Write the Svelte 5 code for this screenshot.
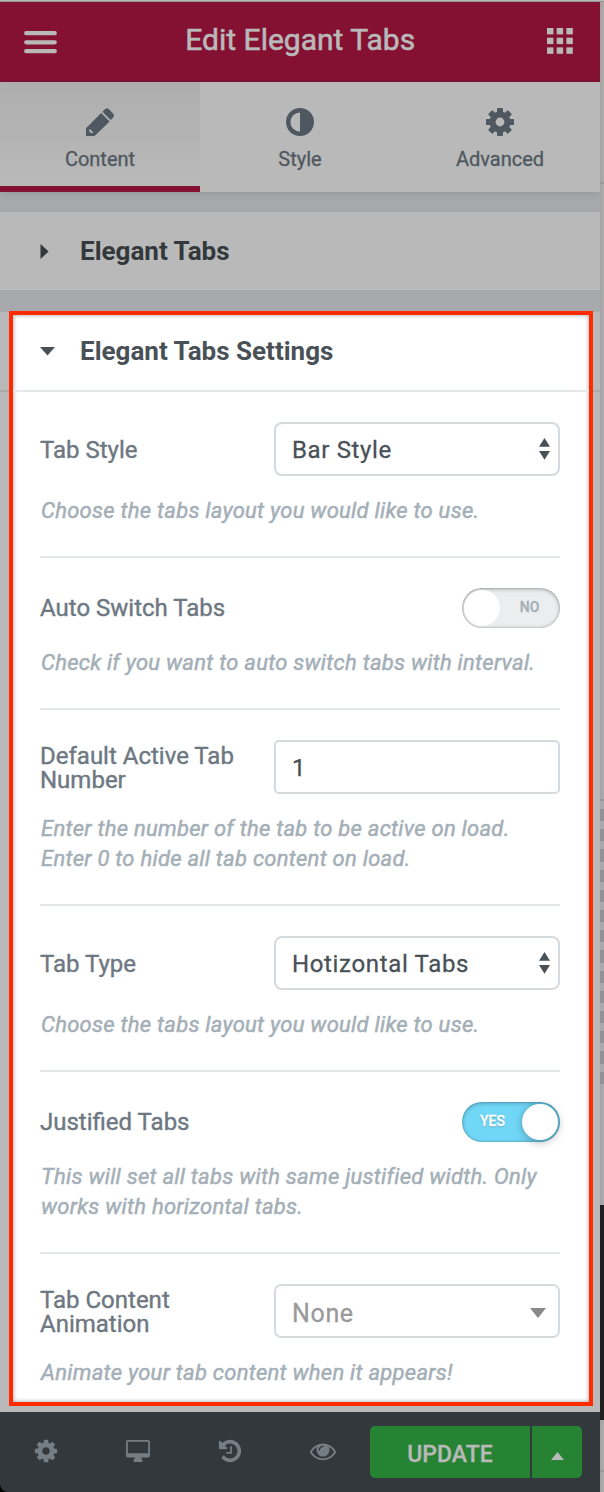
<script>
  const tabs = [
    { id: 'content', label: 'Content' },
    { id: 'style', label: 'Style' },
    { id: 'advanced', label: 'Advanced' }
  ];
  const controls = [
    { label: 'Tab Style', kind: 'select', value: 'Bar Style', help: 'Choose the tabs layout you would like to use.' },
    { label: 'Auto Switch Tabs', kind: 'switch', on: false, help: 'Check if you want to auto switch tabs with interval.' },
    { label: 'Default Active Tab Number', kind: 'input', value: '1', help: 'Enter the number of the tab to be active on load. Enter 0 to hide all tab content on load.' },
    { label: 'Tab Type', kind: 'select', value: 'Hotizontal Tabs', help: 'Choose the tabs layout you would like to use.' },
    { label: 'Justified Tabs', kind: 'switch', on: true, help: 'This will set all tabs with same justified width. Only works with horizontal tabs.' },
    { label: 'Tab Content Animation', kind: 'dropdown', value: 'None', help: 'Animate your tab content when it appears!' }
  ];
  const teeth = [0, 45, 90, 135, 180, 225, 270, 315];
  const cells = [0, 9.7, 19.4];
</script>

<div class="screen">
  <div class="panel">
    <header>
      <svg class="burger" width="33" height="24" viewBox="0 0 33 24"><path d="M2.2 2.2h28.6M2.2 11.3h28.6M2.2 20.2h28.6" stroke="#b9b9b9" stroke-width="4.2" stroke-linecap="round" /></svg>
      <h1>Edit Elegant Tabs</h1>
      <svg class="grid" width="26" height="26" viewBox="0 0 26 26" fill="#b9b9b9">
        {#each cells as y}{#each cells as x}<rect {x} {y} width="6.4" height="6.4" />{/each}{/each}
      </svg>
    </header>

    <nav>
      {#each tabs as tab, i}
        <div class="tab" class:active={i === 0}>
          <svg width="28" height="28" viewBox="0 0 28 28" fill="#4f5860">
            {#if tab.id === 'content'}
              <path fill-rule="evenodd" d="M0 20.2 15.2 5 23.6 13.4 8.6 28H0ZM3.4 21.2a2 2 0 0 1 2.3 2.2l1.5.4-.2 1.3-2.2-.1-1.8-2.1Z" />
              <path d="m16.5 3.8 2.7-2.7Q21 -.6 22.7 1.1l4.5 4.7q1.4 1.8 0 3.6l-2.6 2.7Z" />
            {:else if tab.id === 'style'}
              <path fill-rule="evenodd" d="M14 0a14 14 0 1 1 0 28a14 14 0 1 1 0-28ZM14 4.4a9.6 9.6 0 0 0 0 19.2Z" />
            {:else}
              <mask id="hub"><rect width="28" height="28" fill="#fff" /><circle cx="14" cy="14" r="4.4" fill="#000" /></mask>
              <g mask="url(#hub)">
                <circle cx="14" cy="14" r="10.6" />
                {#each teeth as a}<rect x="11" y="0" width="6" height="7" rx="1" transform={`rotate(${a} 14 14)`} />{/each}
              </g>
            {/if}
          </svg>
          <span>{tab.label}</span>
        </div>
      {/each}
    </nav>

    <section class="collapsed">
      <svg width="9" height="15" viewBox="0 0 9 15"><path d="M.5 0 8.6 7.5.5 15Z" fill="#32383c" /></svg>
      <h2>Elegant Tabs</h2>
    </section>

    <main>
      <div class="highlight">
        <div class="title">
          <svg width="15" height="9" viewBox="0 0 15 9"><path d="M0 0h15L7.5 8.5Z" fill="#495157" /></svg>
          <h2>Elegant Tabs Settings</h2>
        </div>
        <div class="controls">
          {#each controls as c}
            <div class="control">
              <div class="field" class:short={c.kind === 'switch'}>
                <div class="label">{c.label}</div>
                {#if c.kind === 'switch'}
                  <div class="switch" class:on={c.on}><i></i><b>{c.on ? 'YES' : 'NO'}</b></div>
                {:else}
                  <div class={`box ${c.kind}`}>
                    <span>{c.value}</span>
                    {#if c.kind === 'select'}
                      <svg width="11" height="22" viewBox="0 0 11 22"><path d="M0 8.700 5.500 0l5.500 8.700ZM0 13h11l-5.500 8.800Z" fill="#495157" /></svg>
                    {:else if c.kind === 'dropdown'}
                      <svg class="caret" width="16" height="10" viewBox="0 0 16 10"><path d="M0 0h16L8 10Z" fill="#888" /></svg>
                    {/if}
                  </div>
                {/if}
              </div>
              <p>{c.help}</p>
            </div>
          {/each}
        </div>
      </div>
    </main>

    <footer>
      <div class="tools">
        <div><svg width="26" height="26" viewBox="0 0 1792 1792"><path d="M1152 896q0-106-75-181t-181-75-181 75-75 181 75 181 181 75 181-75 75-181zm512-109v222q0 12-8 23t-20 13l-185 28q-19 54-39 91 35 50 107 138 10 12 10 25t-9 23q-27 37-99 108t-94 71q-12 0-26-9l-138-108q-44 23-91 38-16 136-29 186-7 28-36 28h-222q-14 0-24.5-8.5t-11.5-21.5l-28-184q-49-16-90-37l-141 107q-10 9-25 9-14 0-25-11-126-114-165-168-7-10-7-23 0-12 8-23 15-21 51-66.5t54-70.5q-27-50-41-99l-183-27q-13-2-21-12.5t-8-23.5v-222q0-12 8-23t19-13l186-28q14-46 39-92-40-57-107-138-10-12-10-24 0-10 9-23 26-36 98.5-107.5t94.5-71.5q13 0 26 10l138 107q44-23 91-38 16-136 29-186 7-28 36-28h222q14 0 24.5 8.5t11.5 21.5l28 184q49 16 90 37l142-107q9-9 24-9 13 0 25 10 129 119 165 170 7 8 7 22 0 12-8 23-15 21-51 66.5t-54 70.5q26 50 41 98l183 28q13 2 21 12.5t8 23.5z" /></svg></div>
        <div><svg width="24" height="22" viewBox="0 0 24 22"><path fill-rule="evenodd" d="M2 0h20q2 0 2 2v13.500q0 2-2 2H15l1.500 3v1.500h-9v-1.500l1.500-3H2q-2 0-2-2V2Q0 0 2 0ZM1.800 1.800v11.500h20.400V1.800Z" /></svg></div>
        <div class="history"><svg width="26" height="26" viewBox="0 0 1792 1792"><path d="M1664 896q0 156-61 298t-164 245-245 164-298 61q-172 0-327-72.5t-264-204.5q-7-10-6.500-22.5t8.500-20.5l137-138q10-9 25-9 16 2 23 12 73 95 179 147t225 52q104 0 198.500-40.5t163.500-109.500 109.500-163.500 40.500-198.500-40.500-198.500-109.500-163.500-163.500-109.500-198.500-40.500q-98 0-188 35.500t-160 101.500l137 138q31 30 14 69-17 40-59 40h-448q-26 0-45-19t-19-45v-448q0-42 40-59 39-17 69 14l130 129q107-101 244.500-156.500t284.500-55.500q156 0 298 61t245 164 164 245 61 298zm-640-288v448q0 14-9 23t-23 9h-320q-14 0-23-9t-9-23v-64q0-14 9-23t23-9h224v-352q0-14 9-23t23-9h64q14 0 23 9t9 23z" /></svg></div>
        <div><svg width="26" height="26" viewBox="0 0 1792 1792"><path d="M1664 960q-152-236-381-353 61 104 61 225 0 185-131.500 316.500t-316.500 131.500-316.500-131.500-131.500-316.500q0-121 61-225-229 117-381 353 133 205 333.500 326.500t434.500 121.500 434.500-121.500 333.500-326.500zm-720-384q0-20-14-34t-34-14q-125 0-214.500 89.500t-89.500 214.500q0 20 14 34t34 14 34-14 14-34q0-86 61-147t147-61q20 0 34-14t14-34zm848 384q0 34-20 69-140 230-376.500 368.500t-499.500 138.500-499.500-139-376.500-368q-20-35-20-69t20-69q140-229 376.500-368t499.500-139 499.500 139 376.500 368q20 35 20 69z" /></svg></div>
      </div>
      <div class="update">UPDATE</div>
      <div class="more"><svg width="13" height="8" viewBox="0 0 13 8"><path d="M0 8 6.500 0 13 8Z" fill="#b9b9b9" /></svg></div>
    </footer>
  </div>

  <aside>
    <div class="blank one"></div>
    <div class="blank two"></div>
    <div class="stripes"></div>
    <div class="blank three"></div>
    <div class="dark"></div>
    <div class="blank four"></div>
    <div class="blank five"></div>
  </aside>
</div>

<style>
  :global(body) { margin: 0; background: #a7a9ac; }
  * { box-sizing: border-box; }
  h1, h2, p { margin: 0; }
  svg { display: block; }
  .screen { display: flex; width: 604px; height: 1492px; font-family: Roboto, sans-serif; border-top: 1px solid #b9b9b9; overflow: hidden; }
  .panel { display: flex; flex-direction: column; width: 600px; border-top: 1px solid #969696; background: #a7a9ac; }
  header { display: flex; align-items: center; justify-content: space-between; width: 600px; height: 80px; flex: none; padding: 0 25px 0 23.500px; background: #841132; color: #b9b9b9; }
  .burger { margin-top: 1px; }
  .grid { margin-right: 2px; margin-top: -2px; }
  h1 { font-size: 30px; font-weight: 400; line-height: 40px; margin: -5px 3px 0 0; -webkit-text-stroke: .6px; }
  nav { display: grid; grid-template-columns: repeat(3, 200px); height: 110px; flex: none; background: #b9b9b9; box-shadow: 0 1px 8px rgba(0, 0, 0, .12); }
  .tab { display: flex; flex-direction: column; align-items: center; padding-top: 26px; color: #4f5860; font-size: 20px; line-height: 24px; -webkit-text-stroke: .3px; }
  .tab span { margin-top: 11px; }
  .tab.active { background: linear-gradient(#aeaeae, #b9b9b9); border-bottom: 6px solid #841132; }
  .collapsed { display: flex; align-items: center; gap: 31px; height: 78px; flex: none; margin: 20px 0 22px; padding-left: 40px; background: #b9b9b9; color: #32383c; }
  h2 { padding-bottom: 1px; font-size: 26px; font-weight: 700; line-height: 30px; }
  main { height: 1100px; flex: none; padding: 0 7px 6px 9px; background: linear-gradient(#b9b9b9 78px, #a8aaab 78px 80px, #b9b9b9 80px); }
  .highlight { height: 1095px; margin-top: -1px; border: 4px solid #ff2a00; background: #fff; box-shadow: inset 0 0 4px rgba(0, 0, 0, .4); }
  .title { display: flex; align-items: center; gap: 25px; height: 77px; padding: 0 0 3px 27px; border-bottom: 2px solid #e6e9ec; color: #495157; }
  .controls { padding: 0 29px 0 27px; }
  .control { padding: 30px 0; border-bottom: 2px solid #e6e9ec; }
  .control:last-child { border: 0; padding-bottom: 0; }
  .field { display: flex; justify-content: space-between; align-items: center; height: 54px; margin-bottom: 20px; }
  .field.short { height: 40px; }
  .label { width: 210px; padding-top: 2px; color: #6d7882; font-size: 24px; line-height: 24px; -webkit-text-stroke: .4px; }
  .short .label { padding-top: 0; }
  .box { display: flex; align-items: center; justify-content: space-between; width: 286px; height: 54px; padding: 0 8px 0 16px; border: 2px solid #d5dadf; border-radius: 8px; color: #495157; font-size: 24px; letter-spacing: .65px; -webkit-text-stroke: .3px; }
  .box span { padding-top: 2px; }
  .box.input { border-radius: 5px; }
  .box.dropdown { border-radius: 7px; color: #999; font-size: 25px; }
  .box.dropdown span { padding-top: 5px; }
  .caret { margin: 3px 4px 0 0; }
  p { padding-left: 1px; color: #a4afb7; font-size: 22px; font-style: italic; line-height: 30px; letter-spacing: .26px; -webkit-text-stroke: .5px; }
  .switch { display: flex; align-items: center; width: 98px; height: 40px; padding: 2px; border-radius: 20px; background: #ebedef; box-shadow: inset 0 1px 4px rgba(0, 0, 0, .3), inset 0 0 1px 1px rgba(0, 0, 0, .08); }
  .switch i { width: 36px; height: 36px; border-radius: 50%; background: #fff; }
  .switch b { flex: 1; padding: 0 0 2px 1px; text-align: center; color: #a4afb7; font-size: 14px; font-weight: 500; -webkit-text-stroke: .3px; }
  .switch.on { flex-direction: row-reverse; background: #71d7f7; }
  .switch.on i { box-shadow: 0 2px 8px rgba(0, 0, 0, .3); }
  .switch.on b { padding: 0 1px 2px 0; color: #fff; text-shadow: 0 1px 1px rgba(0, 0, 0, .3); }
  footer { display: flex; align-items: flex-start; height: 80px; flex: none; padding-top: 14px; background: #32383c; border-bottom-left-radius: 8px; box-shadow: -8px 8px 0 #000; }
  .tools { display: grid; grid-template-columns: repeat(4, 92.300px); width: 370px; flex: none; height: 50px; fill: #757d85; }
  .tools div { display: flex; align-items: center; justify-content: center; }
  .tools .history { padding-right: 2px; }
  .update, .more { display: flex; align-items: center; justify-content: center; height: 52px; background: #268334; color: #b9b9b9; font-size: 23px; font-weight: 500; }
  .update { width: 160px; margin-right: 2px; padding-top: 4px; border-radius: 5px 0 0 5px; -webkit-text-stroke: .3px; }
  .more { width: 50px; padding-top: 7px; border-radius: 0 5px 5px 0; }
  aside { display: flex; flex-direction: column; width: 4px; border-top: 1px solid #969696; background: #a9a9a9; }
  .blank { flex: none; border-bottom: 2px solid #999; background: linear-gradient(90deg, #a2a2a2, #adadad); }
  .one { height: 182px; }
  .two { height: 617px; }
  .stripes { height: 284px; flex: none; background: repeating-linear-gradient(#a9a9a9 0 8px, #909295 8px 20.200px); }
  .three { height: 120px; border: 0; }
  .dark { height: 215px; flex: none; background: #202020; }
  .four { height: 52px; }
  .five { flex: 1; border: 0; }
</style>
